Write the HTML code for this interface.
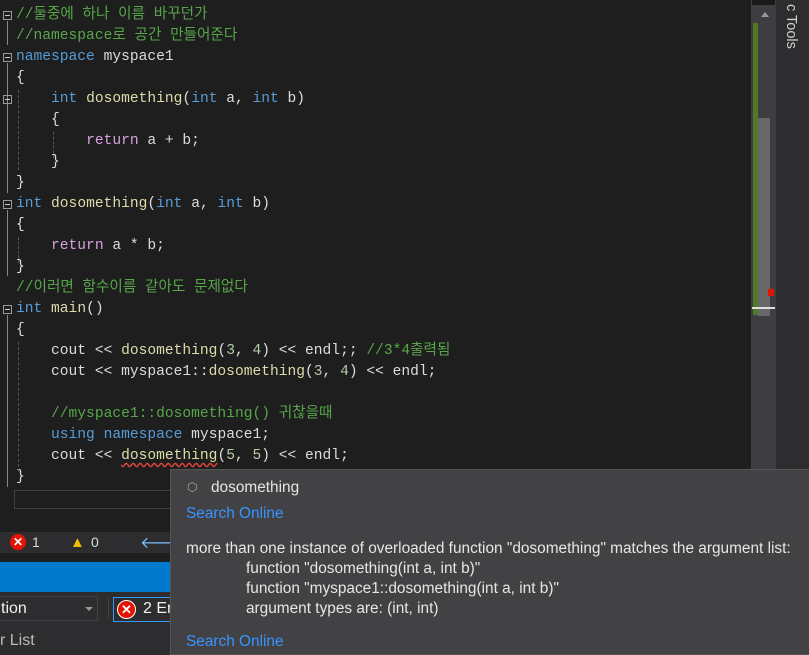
<!DOCTYPE html>
<html><head><meta charset="utf-8"><style>
*{margin:0;padding:0;box-sizing:border-box}
body{width:809px;height:655px;overflow:hidden;background:#1e1e1e;position:relative;font-family:"Liberation Sans","Noto Sans CJK KR",sans-serif}
.code{position:absolute;left:16px;top:5px;font-family:"Liberation Mono","Noto Sans CJK KR",monospace;font-size:14.6px;line-height:21px;color:#dcdcdc;white-space:pre}
.k{color:#569cd6}.f{color:#dcdcaa}.c{color:#57a64a}.r{color:#d8a0df}.n{color:#b5cea8}
.sq{text-decoration:underline wavy #e0443a;text-underline-offset:3px}
.box{position:absolute;width:9px;height:9px;border:1px solid #999;left:3px}
.box:after{content:"";position:absolute;left:1px;right:1px;top:3px;height:1px;background:#ccc}
.vl{position:absolute;width:1px;background:#888;left:7px}
.dl{position:absolute;width:0;border-left:1px dashed #555}
.tip{position:absolute;left:170px;top:469px;width:640px;height:186px;background:#424245;border:1px solid #555;color:#e6e6e6;font-size:15.4px}
.tip div{position:absolute;white-space:nowrap}
.lnk{color:#3794ff}
</style></head><body>
<div class="code"><span class="c">//둘중에 하나 이름 바꾸던가</span>
<span class="c">//namespace로 공간 만들어준다</span>
<span class="k">namespace</span> myspace1
{
    <span class="k">int</span> <span class="f">dosomething</span>(<span class="k">int</span> a, <span class="k">int</span> b)
    {
        <span class="r">return</span> a + b;
    }
}
<span class="k">int</span> <span class="f">dosomething</span>(<span class="k">int</span> a, <span class="k">int</span> b)
{
    <span class="r">return</span> a * b;
}
<span class="c">//이러면 함수이름 같아도 문제없다</span>
<span class="k">int</span> <span class="f">main</span>()
{
    cout &lt;&lt; <span class="f">dosomething</span>(<span class="n">3</span>, <span class="n">4</span>) &lt;&lt; endl;; <span class="c">//3*4출력됨</span>
    cout &lt;&lt; myspace1::<span class="f">dosomething</span>(<span class="n">3</span>, <span class="n">4</span>) &lt;&lt; endl;

    <span class="c">//myspace1::dosomething() 귀찮을때</span>
    <span class="k">using</span> <span class="k">namespace</span> myspace1;
    cout &lt;&lt; <span class="f sq">dosomething</span>(<span class="n">5</span>, <span class="n">5</span>) &lt;&lt; endl;
}</div>
<div class="box" style="top:11px"></div><div class="vl" style="top:21px;height:24px"></div>
<div class="box" style="top:53px"></div><div class="vl" style="top:63px;height:130px"></div>
<div class="box" style="top:95px"></div><div class="vl" style="top:105px;height:66px"></div>
<div class="box" style="top:200px"></div><div class="vl" style="top:210px;height:66px"></div>
<div class="box" style="top:305px"></div><div class="vl" style="top:315px;height:172px"></div>
<div class="dl" style="left:18px;top:90px;height:80px"></div>
<div class="dl" style="left:53px;top:132px;height:26px"></div>
<div class="dl" style="left:18px;top:237px;height:26px"></div>
<div class="dl" style="left:18px;top:342px;height:130px"></div>
<div style="position:absolute;left:14px;top:490px;width:160px;height:19px;border:1px solid #3f3f46"></div>
<div style="position:absolute;left:751px;top:0;width:25px;height:530px;background:#3e3e42"></div>
<div style="position:absolute;left:752px;top:0;width:23px;height:5px;background:#1a1a1a"></div>
<div style="position:absolute;left:761px;top:12px;border:4px solid transparent;border-bottom:5px solid #999;border-top:0"></div>
<div style="position:absolute;left:753px;top:23px;width:5px;height:292px;background:#4e7a2a"></div>
<div style="position:absolute;left:758px;top:118px;width:12px;height:198px;background:#686868"></div>
<div style="position:absolute;left:768px;top:289px;width:6px;height:7px;background:#e51400"></div>
<div style="position:absolute;left:752px;top:307px;width:23px;height:2px;background:#ddd"></div>
<div style="position:absolute;left:776px;top:0;width:33px;height:530px;background:#2d2d30"></div>
<div style="position:absolute;left:783px;top:4px;color:#d0d0d0;font-size:14.5px;writing-mode:vertical-rl;white-space:nowrap">c Tools</div>
<div style="position:absolute;left:0;top:532px;width:809px;height:21px;background:#2d2d30;color:#ddd;font-size:14px">
<span style="position:absolute;left:10px;top:2px;width:16px;height:16px;border-radius:50%;background:#e51400;color:#fff;font-size:12px;font-weight:bold;text-align:center;line-height:16px">✕</span>
<span style="position:absolute;left:32px;top:2px">1</span>
<span style="position:absolute;left:70px;top:2px;color:#f0c000;font-size:15px">▲</span>
<span style="position:absolute;left:91px;top:2px">0</span>
<span style="position:absolute;left:140px;top:0;color:#75beff;font-size:16px">🡐</span>
</div>
<div style="position:absolute;left:0;top:562px;width:809px;height:30px;background:#007acc"></div>
<div style="position:absolute;left:0;top:592px;width:809px;height:63px;background:#2d2d30"></div>
<div style="position:absolute;left:-2px;top:596px;width:100px;height:25px;border:1px solid #434346;color:#f1f1f1;font-size:16px;padding:3px 0 0 2px">tion<span style="position:absolute;left:86px;top:10px;border:4px solid transparent;border-top:4px solid #999"></span></div>
<div style="position:absolute;left:108px;top:597px;width:1px;height:22px;background:#444"></div>
<div style="position:absolute;left:113px;top:597px;width:70px;height:25px;border:1px solid #3399ff;color:#f1f1f1;font-size:16px">
<span style="position:absolute;left:3px;top:2px;width:19px;height:19px;border-radius:50%;background:#e51400;border:1px solid #fff;color:#fff;font-size:13px;font-weight:bold;text-align:center;line-height:17px">✕</span>
<span style="position:absolute;left:29px;top:2px">2 Er</span></div>
<div style="position:absolute;left:0;top:632px;color:#bbb;font-size:16px">r List</div>
<div class="tip">
<div style="left:16px;top:10px;color:#aaa;font-size:12px">⬡</div>
<div style="left:40px;top:9px">dosomething</div>
<div class="lnk" style="left:15px;top:35px">Search Online</div>
<div style="left:15px;top:70px">more than one instance of overloaded function "dosomething" matches the argument list:</div>
<div style="left:75px;top:90px">function "dosomething(int a, int b)"</div>
<div style="left:75px;top:110px">function "myspace1::dosomething(int a, int b)"</div>
<div style="left:75px;top:130px">argument types are: (int, int)</div>
<div class="lnk" style="left:15px;top:163px">Search Online</div>
</div>
</body></html>
